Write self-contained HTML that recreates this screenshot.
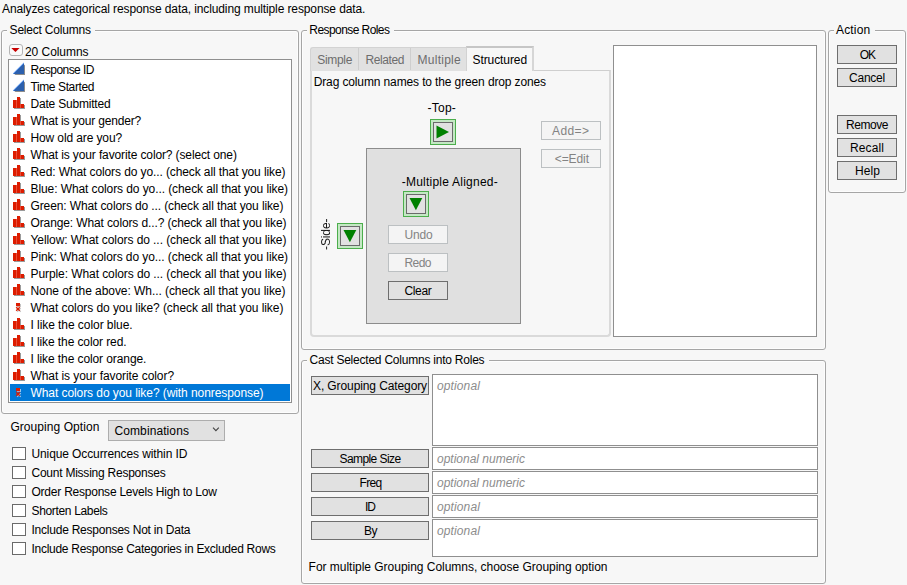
<!DOCTYPE html>
<html><head><meta charset="utf-8"><title>Categorical</title>
<style>
html,body{margin:0;padding:0}
body{width:907px;height:585px;background:#f7f7f7;position:relative;overflow:hidden;font:12px "Liberation Sans", sans-serif;}
.abs{position:absolute}
.t{position:absolute;white-space:pre;font:12px "Liberation Sans", sans-serif;line-height:14px;height:14px}
.fs{position:absolute;border:1px solid #a6a6a6;border-radius:3px;box-shadow:inset 0 0 0 1px #fdfdfd}
.lg{position:absolute;height:5px;background:#f7f7f7}
.btn{position:absolute;border:1px solid #6e6e6e;background:#e1e1e1}
.btn.dis{border-color:#bcc0c2;background:#f4f4f4}
.lb{position:absolute;border:1px solid #8f8f8f;background:#fff}
.cb{position:absolute;width:12px;height:11px;border:1px solid #6a6a6a;background:#fff}
</style></head><body>
<div class="fs" style="left:1px;top:30px;width:296px;height:382px"></div><div class="lg" style="left:7px;top:28px;width:88px"></div>
<div class="fs" style="left:301px;top:30px;width:523px;height:318px"></div><div class="lg" style="left:307px;top:28px;width:87px"></div>
<div class="fs" style="left:828px;top:30px;width:76px;height:161px"></div><div class="lg" style="left:834px;top:28px;width:41px"></div>
<div class="fs" style="left:301px;top:360px;width:523px;height:222px"></div><div class="lg" style="left:307px;top:358px;width:182px"></div>
<!-- select columns -->
<div class="abs" style="left:9px;top:44px;width:12px;height:10px;border:1px solid #b4b4b4;border-radius:3px;background:#fafafa"></div>
<svg class="abs" style="left:9px;top:44px" width="14" height="13" viewBox="0 0 14 13"><polygon points="2.3,3.9 10.6,3.9 6.45,8.1" fill="#c80000"/></svg>
<div class="lb" style="left:8px;top:59px;width:282px;height:342px"></div>
<div class="abs" style="left:10px;top:384px;width:280px;height:17px;background:#0078d7"></div>
<svg class="abs" style="left:12px;top:62px" width="14" height="14" viewBox="0 0 14 14"><polygon points="2.4,13 13,13 13,2.4" fill="#8d8d8d"/><polygon points="1,12 12,12 12,1" fill="#2c60ad"/><path d="M1.2,11.6L11.8,1" stroke="#4d8ff0" stroke-width="1" fill="none"/></svg>
<svg class="abs" style="left:12px;top:79px" width="14" height="14" viewBox="0 0 14 14"><polygon points="2.4,13 13,13 13,2.4" fill="#8d8d8d"/><polygon points="1,12 12,12 12,1" fill="#2c60ad"/><path d="M1.2,11.6L11.8,1" stroke="#4d8ff0" stroke-width="1" fill="none"/></svg>
<svg class="abs" style="left:12px;top:96px" width="14" height="14" viewBox="0 0 14 14"><path d="M2,5h3v-3h4v7h4v4h-11z" fill="#9a9a9a"/><path d="M1,4h4v-3h3v7h4v4h-11z" fill="#e8503a"/><rect x="1" y="4" width="3" height="8" fill="#dd1c00"/><rect x="5" y="1" width="3" height="11" fill="#dd1c00"/><rect x="9" y="8" width="3" height="4" fill="#dd1c00"/></svg>
<svg class="abs" style="left:12px;top:113px" width="14" height="14" viewBox="0 0 14 14"><path d="M2,5h3v-3h4v7h4v4h-11z" fill="#9a9a9a"/><path d="M1,4h4v-3h3v7h4v4h-11z" fill="#e8503a"/><rect x="1" y="4" width="3" height="8" fill="#dd1c00"/><rect x="5" y="1" width="3" height="11" fill="#dd1c00"/><rect x="9" y="8" width="3" height="4" fill="#dd1c00"/></svg>
<svg class="abs" style="left:12px;top:130px" width="14" height="14" viewBox="0 0 14 14"><path d="M2,5h3v-3h4v7h4v4h-11z" fill="#9a9a9a"/><path d="M1,4h4v-3h3v7h4v4h-11z" fill="#e8503a"/><rect x="1" y="4" width="3" height="8" fill="#dd1c00"/><rect x="5" y="1" width="3" height="11" fill="#dd1c00"/><rect x="9" y="8" width="3" height="4" fill="#dd1c00"/></svg>
<svg class="abs" style="left:12px;top:147px" width="14" height="14" viewBox="0 0 14 14"><path d="M2,5h3v-3h4v7h4v4h-11z" fill="#9a9a9a"/><path d="M1,4h4v-3h3v7h4v4h-11z" fill="#e8503a"/><rect x="1" y="4" width="3" height="8" fill="#dd1c00"/><rect x="5" y="1" width="3" height="11" fill="#dd1c00"/><rect x="9" y="8" width="3" height="4" fill="#dd1c00"/></svg>
<svg class="abs" style="left:12px;top:164px" width="14" height="14" viewBox="0 0 14 14"><path d="M2,5h3v-3h4v7h4v4h-11z" fill="#9a9a9a"/><path d="M1,4h4v-3h3v7h4v4h-11z" fill="#e8503a"/><rect x="1" y="4" width="3" height="8" fill="#dd1c00"/><rect x="5" y="1" width="3" height="11" fill="#dd1c00"/><rect x="9" y="8" width="3" height="4" fill="#dd1c00"/></svg>
<svg class="abs" style="left:12px;top:181px" width="14" height="14" viewBox="0 0 14 14"><path d="M2,5h3v-3h4v7h4v4h-11z" fill="#9a9a9a"/><path d="M1,4h4v-3h3v7h4v4h-11z" fill="#e8503a"/><rect x="1" y="4" width="3" height="8" fill="#dd1c00"/><rect x="5" y="1" width="3" height="11" fill="#dd1c00"/><rect x="9" y="8" width="3" height="4" fill="#dd1c00"/></svg>
<svg class="abs" style="left:12px;top:198px" width="14" height="14" viewBox="0 0 14 14"><path d="M2,5h3v-3h4v7h4v4h-11z" fill="#9a9a9a"/><path d="M1,4h4v-3h3v7h4v4h-11z" fill="#e8503a"/><rect x="1" y="4" width="3" height="8" fill="#dd1c00"/><rect x="5" y="1" width="3" height="11" fill="#dd1c00"/><rect x="9" y="8" width="3" height="4" fill="#dd1c00"/></svg>
<svg class="abs" style="left:12px;top:215px" width="14" height="14" viewBox="0 0 14 14"><path d="M2,5h3v-3h4v7h4v4h-11z" fill="#9a9a9a"/><path d="M1,4h4v-3h3v7h4v4h-11z" fill="#e8503a"/><rect x="1" y="4" width="3" height="8" fill="#dd1c00"/><rect x="5" y="1" width="3" height="11" fill="#dd1c00"/><rect x="9" y="8" width="3" height="4" fill="#dd1c00"/></svg>
<svg class="abs" style="left:12px;top:232px" width="14" height="14" viewBox="0 0 14 14"><path d="M2,5h3v-3h4v7h4v4h-11z" fill="#9a9a9a"/><path d="M1,4h4v-3h3v7h4v4h-11z" fill="#e8503a"/><rect x="1" y="4" width="3" height="8" fill="#dd1c00"/><rect x="5" y="1" width="3" height="11" fill="#dd1c00"/><rect x="9" y="8" width="3" height="4" fill="#dd1c00"/></svg>
<svg class="abs" style="left:12px;top:249px" width="14" height="14" viewBox="0 0 14 14"><path d="M2,5h3v-3h4v7h4v4h-11z" fill="#9a9a9a"/><path d="M1,4h4v-3h3v7h4v4h-11z" fill="#e8503a"/><rect x="1" y="4" width="3" height="8" fill="#dd1c00"/><rect x="5" y="1" width="3" height="11" fill="#dd1c00"/><rect x="9" y="8" width="3" height="4" fill="#dd1c00"/></svg>
<svg class="abs" style="left:12px;top:266px" width="14" height="14" viewBox="0 0 14 14"><path d="M2,5h3v-3h4v7h4v4h-11z" fill="#9a9a9a"/><path d="M1,4h4v-3h3v7h4v4h-11z" fill="#e8503a"/><rect x="1" y="4" width="3" height="8" fill="#dd1c00"/><rect x="5" y="1" width="3" height="11" fill="#dd1c00"/><rect x="9" y="8" width="3" height="4" fill="#dd1c00"/></svg>
<svg class="abs" style="left:12px;top:283px" width="14" height="14" viewBox="0 0 14 14"><path d="M2,5h3v-3h4v7h4v4h-11z" fill="#9a9a9a"/><path d="M1,4h4v-3h3v7h4v4h-11z" fill="#e8503a"/><rect x="1" y="4" width="3" height="8" fill="#dd1c00"/><rect x="5" y="1" width="3" height="11" fill="#dd1c00"/><rect x="9" y="8" width="3" height="4" fill="#dd1c00"/></svg>
<svg class="abs" style="left:12px;top:300px" width="14" height="14" viewBox="0 0 14 14"><rect x="5" y="4" width="4" height="3" fill="#c4c4c4"/><path d="M5.2,8.2l3.6,3.6M8.8,8.2l-3.6,3.6" stroke="#c4c4c4" stroke-width="1.1"/><rect x="4" y="3" width="4" height="3.2" fill="#dd1c00"/><path d="M4.2,7.2l3.6,3.6M7.8,7.2l-3.6,3.6" stroke="#dd1c00" stroke-width="1.4"/></svg>
<svg class="abs" style="left:12px;top:317px" width="14" height="14" viewBox="0 0 14 14"><path d="M2,5h3v-3h4v7h4v4h-11z" fill="#9a9a9a"/><path d="M1,4h4v-3h3v7h4v4h-11z" fill="#e8503a"/><rect x="1" y="4" width="3" height="8" fill="#dd1c00"/><rect x="5" y="1" width="3" height="11" fill="#dd1c00"/><rect x="9" y="8" width="3" height="4" fill="#dd1c00"/></svg>
<svg class="abs" style="left:12px;top:334px" width="14" height="14" viewBox="0 0 14 14"><path d="M2,5h3v-3h4v7h4v4h-11z" fill="#9a9a9a"/><path d="M1,4h4v-3h3v7h4v4h-11z" fill="#e8503a"/><rect x="1" y="4" width="3" height="8" fill="#dd1c00"/><rect x="5" y="1" width="3" height="11" fill="#dd1c00"/><rect x="9" y="8" width="3" height="4" fill="#dd1c00"/></svg>
<svg class="abs" style="left:12px;top:351px" width="14" height="14" viewBox="0 0 14 14"><path d="M2,5h3v-3h4v7h4v4h-11z" fill="#9a9a9a"/><path d="M1,4h4v-3h3v7h4v4h-11z" fill="#e8503a"/><rect x="1" y="4" width="3" height="8" fill="#dd1c00"/><rect x="5" y="1" width="3" height="11" fill="#dd1c00"/><rect x="9" y="8" width="3" height="4" fill="#dd1c00"/></svg>
<svg class="abs" style="left:12px;top:368px" width="14" height="14" viewBox="0 0 14 14"><path d="M2,5h3v-3h4v7h4v4h-11z" fill="#9a9a9a"/><path d="M1,4h4v-3h3v7h4v4h-11z" fill="#e8503a"/><rect x="1" y="4" width="3" height="8" fill="#dd1c00"/><rect x="5" y="1" width="3" height="11" fill="#dd1c00"/><rect x="9" y="8" width="3" height="4" fill="#dd1c00"/></svg>
<svg class="abs" style="left:12px;top:385px" width="14" height="14" viewBox="0 0 14 14"><rect x="5" y="4" width="4" height="3" fill="#9cc3ea"/><path d="M5.2,8.2l3.6,3.6M8.8,8.2l-3.6,3.6" stroke="#9cc3ea" stroke-width="1.1"/><rect x="4" y="3" width="4" height="3.2" fill="#dd1c00"/><path d="M4.2,7.2l3.6,3.6M7.8,7.2l-3.6,3.6" stroke="#dd1c00" stroke-width="1.4"/></svg>
<!-- combobox -->
<div class="abs" style="left:108px;top:420px;width:115px;height:19px;border:1px solid #adadad;background:#e1e1e1"></div>
<svg class="abs" style="left:211px;top:425px" width="10" height="9" viewBox="0 0 10 9"><path d="M2,2.6L4.9,5.6L7.8,2.6" fill="none" stroke="#444" stroke-width="1.1"/></svg>
<div class="cb" style="left:12px;top:447px"></div><div class="cb" style="left:12px;top:466px"></div><div class="cb" style="left:12px;top:485px"></div><div class="cb" style="left:12px;top:504px"></div><div class="cb" style="left:12px;top:523px"></div><div class="cb" style="left:12px;top:542px"></div>
<!-- tabs -->
<div class="abs" style="left:310px;top:70px;width:297px;height:264px;border:2px solid #dadada;border-top:1px solid #cfcfcf;border-radius:0 0 4px 4px"></div>
<div class="abs" style="left:310px;top:47px;width:156px;height:23px;background:#e1e1e1;border:1px solid #d3d3d3;border-bottom:none;border-right:none;border-radius:3px 0 0 0"></div>
<div class="abs" style="left:358px;top:48px;width:1px;height:22px;background:#cecece"></div>
<div class="abs" style="left:410px;top:48px;width:1px;height:22px;background:#cecece"></div>
<div class="abs" style="left:466px;top:46px;width:65px;height:23px;background:#f7f7f7;border-top:2px solid #c6c6c6;border-left:1px solid #d2d2d2;border-right:2px solid #d6d6d6;"></div>
<div class="abs" style="left:467px;top:70px;width:65px;height:1px;background:#f7f7f7"></div>
<svg class="abs" style="left:430px;top:119px" width="26" height="26" viewBox="0 0 26 26"><rect x="0.5" y="0.5" width="25" height="25" fill="#c4e8c4" stroke="#4cae4c"/><rect x="3.5" y="3.5" width="19" height="19" fill="#e1e1e1" stroke="#6a6a6a"/><polygon points="6.5,6.5 6.5,19.5 19,13" fill="#008000"/></svg>
<div class="abs" style="left:366px;top:148px;width:153px;height:174px;border:1px solid #8c8c8c;background:#e0e0e0"></div>
<svg class="abs" style="left:403px;top:191px" width="26" height="26" viewBox="0 0 26 26"><rect x="0.5" y="0.5" width="25" height="25" fill="#c4e8c4" stroke="#4cae4c"/><rect x="3.5" y="3.5" width="19" height="19" fill="#e1e1e1" stroke="#6a6a6a"/><polygon points="6.5,7 19.3,7 12.9,19.2" fill="#008000"/></svg>
<svg class="abs" style="left:337px;top:223px" width="26" height="26" viewBox="0 0 26 26"><rect x="0.5" y="0.5" width="25" height="25" fill="#c4e8c4" stroke="#4cae4c"/><rect x="3.5" y="3.5" width="19" height="19" fill="#e1e1e1" stroke="#6a6a6a"/><polygon points="6.5,7 19.3,7 12.9,19.2" fill="#008000"/></svg>
<div class="abs" style="left:311px;top:228px;width:30px;height:14px;line-height:14px;font-size:12px;color:#1a1a1a;will-change:transform;transform:rotate(-90deg);transform-origin:center;text-align:center;white-space:pre;letter-spacing:-0.1px">-Side-</div>
<div class="btn dis" style="left:388px;top:225px;width:58px;height:17px"></div>
<div class="btn dis" style="left:388px;top:253px;width:58px;height:17px"></div>
<div class="btn" style="left:388px;top:281px;width:58px;height:17px"></div>
<div class="btn dis" style="left:541px;top:121px;width:58px;height:17px"></div>
<div class="btn dis" style="left:541px;top:149px;width:58px;height:17px"></div>
<div class="lb" style="left:613px;top:45px;width:202px;height:290px"></div>
<!-- action -->
<div class="btn" style="left:837px;top:45px;width:58px;height:17px"></div>
<div class="btn" style="left:837px;top:68px;width:58px;height:17px"></div>
<div class="btn" style="left:837px;top:115px;width:58px;height:17px"></div>
<div class="btn" style="left:837px;top:138px;width:58px;height:17px"></div>
<div class="btn" style="left:837px;top:161px;width:58px;height:17px"></div>
<!-- cast -->
<div class="btn" style="left:311px;top:376px;width:116px;height:17px"></div>
<div class="btn" style="left:311px;top:449px;width:116px;height:17px"></div>
<div class="btn" style="left:311px;top:473px;width:116px;height:17px"></div>
<div class="btn" style="left:311px;top:497px;width:116px;height:17px"></div>
<div class="btn" style="left:311px;top:521px;width:116px;height:17px"></div>
<div class="lb" style="left:432px;top:374px;width:384px;height:70px"></div>
<div class="lb" style="left:432px;top:447px;width:384px;height:21px"></div>
<div class="lb" style="left:432px;top:471px;width:384px;height:21px"></div>
<div class="lb" style="left:432px;top:495px;width:384px;height:21px"></div>
<div class="lb" style="left:432px;top:519px;width:384px;height:36px"></div>
<span class="t" style="left:2.0px;top:2px;color:#000;letter-spacing:-0.110px;">Analyzes categorical response data, including multiple response data.</span>
<span class="t" style="left:9.6px;top:23px;color:#000;letter-spacing:-0.210px;">Select Columns</span>
<span class="t" style="left:309.3px;top:22.5px;color:#000;letter-spacing:-0.569px;">Response Roles</span>
<span class="t" style="left:836.0px;top:22.700000000000003px;color:#000;letter-spacing:0.157px;">Action</span>
<span class="t" style="left:309.5px;top:352.5px;color:#000;letter-spacing:-0.225px;">Cast Selected Columns into Roles</span>
<span class="t" style="left:25.0px;top:45px;color:#000;letter-spacing:-0.053px;">20 Columns</span>
<span class="t" style="left:30.5px;top:63px;color:#000;letter-spacing:-0.534px;">Response ID</span>
<span class="t" style="left:30.5px;top:80px;color:#000;letter-spacing:-0.396px;">Time Started</span>
<span class="t" style="left:30.5px;top:97px;color:#000;letter-spacing:-0.201px;">Date Submitted</span>
<span class="t" style="left:30.5px;top:114px;color:#000;letter-spacing:-0.178px;">What is your gender?</span>
<span class="t" style="left:30.5px;top:131px;color:#000;letter-spacing:-0.118px;">How old are you?</span>
<span class="t" style="left:30.5px;top:148px;color:#000;letter-spacing:-0.125px;">What is your favorite color? (select one)</span>
<span class="t" style="left:30.5px;top:165px;color:#000;letter-spacing:-0.102px;">Red: What colors do yo... (check all that you like)</span>
<span class="t" style="left:30.5px;top:182px;color:#000;letter-spacing:-0.089px;">Blue: What colors do yo... (check all that you like)</span>
<span class="t" style="left:30.5px;top:199px;color:#000;letter-spacing:-0.117px;">Green: What colors do ... (check all that you like)</span>
<span class="t" style="left:30.5px;top:216px;color:#000;letter-spacing:-0.122px;">Orange: What colors d...? (check all that you like)</span>
<span class="t" style="left:30.5px;top:233px;color:#000;letter-spacing:-0.073px;">Yellow: What colors do ... (check all that you like)</span>
<span class="t" style="left:30.5px;top:250px;color:#000;letter-spacing:-0.076px;">Pink: What colors do yo... (check all that you like)</span>
<span class="t" style="left:30.5px;top:267px;color:#000;letter-spacing:-0.081px;">Purple: What colors do ... (check all that you like)</span>
<span class="t" style="left:30.5px;top:284px;color:#000;letter-spacing:-0.065px;">None of the above: Wh... (check all that you like)</span>
<span class="t" style="left:30.5px;top:301px;color:#000;letter-spacing:-0.066px;">What colors do you like? (check all that you like)</span>
<span class="t" style="left:30.5px;top:318px;color:#000;letter-spacing:-0.059px;">I like the color blue.</span>
<span class="t" style="left:30.5px;top:335px;color:#000;letter-spacing:-0.097px;">I like the color red.</span>
<span class="t" style="left:30.5px;top:352px;color:#000;letter-spacing:-0.095px;">I like the color orange.</span>
<span class="t" style="left:30.5px;top:369px;color:#000;letter-spacing:-0.068px;">What is your favorite color?</span>
<span class="t" style="left:30.5px;top:386px;color:#fff;letter-spacing:-0.073px;">What colors do you like? (with nonresponse)</span>
<span class="t" style="left:10.4px;top:420px;color:#000;letter-spacing:0.062px;">Grouping Option</span>
<span class="t" style="left:114.5px;top:424px;color:#000;letter-spacing:0.094px;">Combinations</span>
<span class="t" style="left:31.5px;top:447px;color:#000;letter-spacing:-0.108px;">Unique Occurrences within ID</span>
<span class="t" style="left:31.5px;top:466px;color:#000;letter-spacing:-0.239px;">Count Missing Responses</span>
<span class="t" style="left:31.5px;top:485px;color:#000;letter-spacing:-0.230px;">Order Response Levels High to Low</span>
<span class="t" style="left:31.5px;top:504px;color:#000;letter-spacing:-0.338px;">Shorten Labels</span>
<span class="t" style="left:31.5px;top:523px;color:#000;letter-spacing:-0.232px;">Include Responses Not in Data</span>
<span class="t" style="left:31.5px;top:542px;color:#000;letter-spacing:-0.276px;">Include Response Categories in Excluded Rows</span>
<span class="t" style="left:317.3px;top:53px;color:#6d6d6d;letter-spacing:-0.331px;">Simple</span>
<span class="t" style="left:365.5px;top:53px;color:#6d6d6d;letter-spacing:-0.411px;">Related</span>
<span class="t" style="left:417.5px;top:53px;color:#6d6d6d;letter-spacing:0.268px;">Multiple</span>
<span class="t" style="left:472.5px;top:53px;color:#000;letter-spacing:-0.086px;">Structured</span>
<span class="t" style="left:313.7px;top:75px;color:#000;letter-spacing:-0.126px;">Drag column names to the green drop zones</span>
<span class="t" style="left:427.6px;top:101px;color:#000;letter-spacing:0.211px;">-Top-</span>
<span class="t" style="left:401.7px;top:175px;color:#000;letter-spacing:0.236px;">-Multiple Aligned-</span>
<span class="t" style="left:552.0px;top:124px;color:#838383;letter-spacing:0.385px;">Add=&gt;</span>
<span class="t" style="left:554.7px;top:152px;color:#838383;letter-spacing:-0.067px;">&lt;=Edit</span>
<span class="t" style="left:404.4px;top:228px;color:#838383;letter-spacing:-0.172px;">Undo</span>
<span class="t" style="left:404.4px;top:256px;color:#838383;letter-spacing:-0.522px;">Redo</span>
<span class="t" style="left:404.4px;top:284px;color:#000;letter-spacing:-0.317px;">Clear</span>
<span class="t" style="left:859.7px;top:48px;color:#000;letter-spacing:-1.022px;">OK</span>
<span class="t" style="left:849.0px;top:71px;color:#000;letter-spacing:-0.227px;">Cancel</span>
<span class="t" style="left:846.0px;top:118px;color:#000;letter-spacing:-0.448px;">Remove</span>
<span class="t" style="left:850.0px;top:141px;color:#000;letter-spacing:0.107px;">Recall</span>
<span class="t" style="left:855.0px;top:164px;color:#000;letter-spacing:0.078px;">Help</span>
<span class="t" style="left:313.0px;top:379px;color:#000;letter-spacing:-0.103px;">X, Grouping Category</span>
<span class="t" style="left:339.5px;top:452px;color:#000;letter-spacing:-0.580px;">Sample Size</span>
<span class="t" style="left:359.5px;top:476px;color:#000;letter-spacing:-0.672px;">Freq</span>
<span class="t" style="left:365.0px;top:500px;color:#000;letter-spacing:-1.000px;">ID</span>
<span class="t" style="left:364.0px;top:524px;color:#000;letter-spacing:-0.508px;">By</span>
<span class="t" style="left:437.0px;top:379px;color:#8c8c8c;letter-spacing:0.119px;font-style:italic;">optional</span>
<span class="t" style="left:437.0px;top:452px;color:#8c8c8c;letter-spacing:-0.004px;font-style:italic;">optional numeric</span>
<span class="t" style="left:437.0px;top:476px;color:#8c8c8c;letter-spacing:-0.004px;font-style:italic;">optional numeric</span>
<span class="t" style="left:437.0px;top:500px;color:#8c8c8c;letter-spacing:0.119px;font-style:italic;">optional</span>
<span class="t" style="left:437.0px;top:524px;color:#8c8c8c;letter-spacing:0.119px;font-style:italic;">optional</span>
<span class="t" style="left:308.6px;top:560px;color:#000;letter-spacing:-0.024px;">For multiple Grouping Columns, choose Grouping option</span>
</body></html>
